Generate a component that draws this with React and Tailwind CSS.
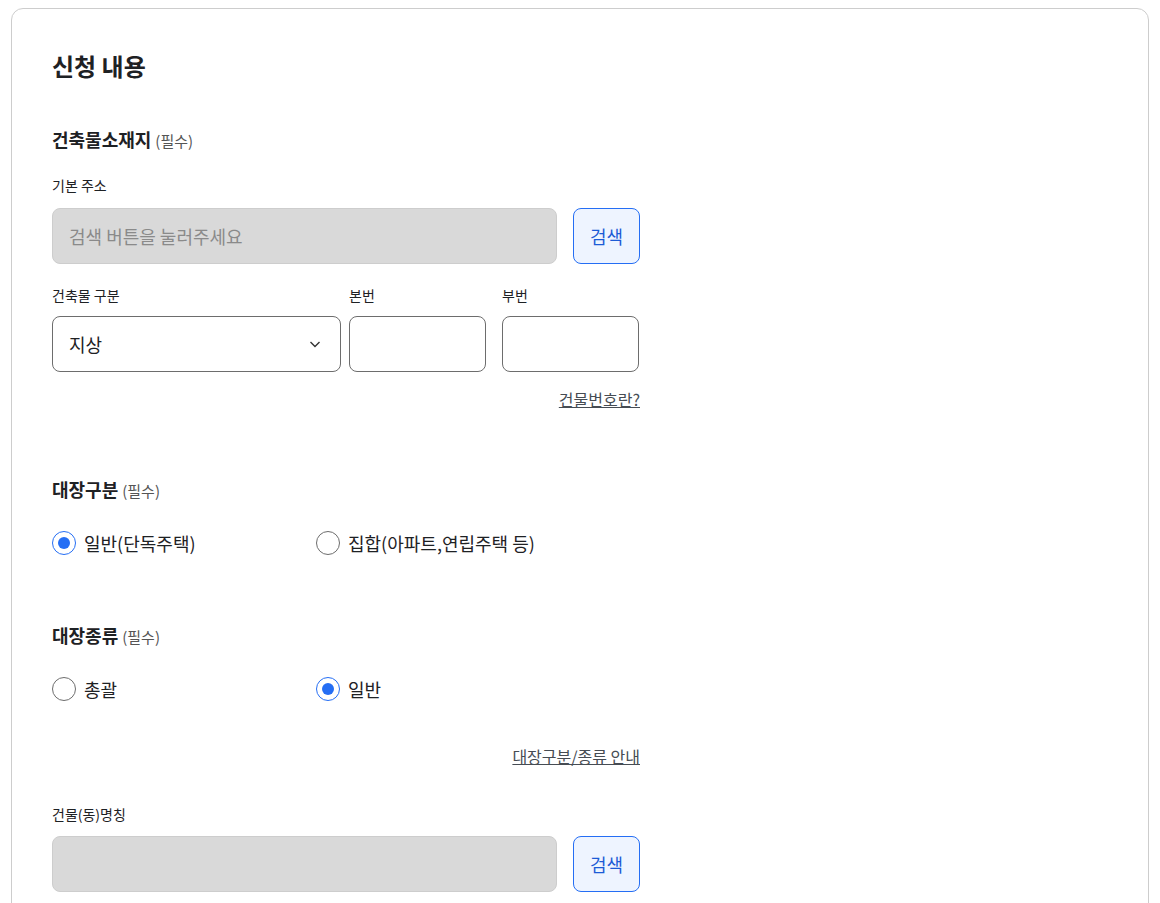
import React from "react";

const font = { fontFamily: '"Noto Sans CJK KR", "Noto Sans", sans-serif' };

function Heading({ children, className }) {
  return (
    <div className={"flex items-baseline h-6 leading-6 text-[18px] font-bold text-[#1e2124] " + className}>
      <span>{children}</span>
      <span className="ml-1 text-[15px] font-normal text-[#555] leading-6">(필수)</span>
    </div>
  );
}

function Radio({ checked, label }) {
  return (
    <label className="flex items-center gap-2 h-6">
      <span
        className={
          checked
            ? "w-6 h-6 rounded-full border border-[#256ef4] flex items-center justify-center bg-white"
            : "w-6 h-6 rounded-full border border-[#6d6d6d] bg-white"
        }
      >
        {checked && <span className="w-3 h-3 rounded-full bg-[#256ef4]" />}
      </span>
      <span className="text-[18px] text-[#1e2124] leading-6">{label}</span>
    </label>
  );
}

function SearchButton() {
  return (
    <button className="w-[67px] h-14 rounded-lg border border-[#256ef4] bg-[#eef4ff] text-[#1c5bd6] text-[18px] shrink-0">
      검색
    </button>
  );
}

export default function App() {
  return (
    <div className="bg-white min-h-[903px] pt-2 px-[11px]" style={font}>
      <div className="border border-[#cdcdcd] rounded-xl bg-white px-10 pt-[41px] pb-10 min-h-[920px]">
        <h2 className="text-[24px] font-bold leading-8 h-8 text-[#1e2124]">신청 내용</h2>

        <div className="w-[588px]">
          <Heading className="mt-[45px]">건축물소재지</Heading>
          <div className="mt-[24px] h-5 leading-5 text-[14px] text-[#1e2124]">기본 주소</div>
          <div className="mt-[13px] flex gap-4">
            <div className="flex-1 h-14 rounded-lg border border-[#cdcdcd] bg-[#d9d9d9] flex items-center px-4 text-[18px] text-[#8a8a8a]">
              검색 버튼을 눌러주세요
            </div>
            <SearchButton />
          </div>

          <div className="mt-[21px] flex">
            <div className="w-[289px]">
              <div className="h-5 leading-5 text-[14px] text-[#1e2124]">건축물 구분</div>
              <div className="mt-[11px] h-14 rounded-lg border border-[#6d6d6d] flex items-center justify-between pl-4 pr-[18px] text-[18px] text-[#1e2124]">
                <span>지상</span>
                <svg width="14" height="14" viewBox="0 0 14 14" fill="none" stroke="#333" strokeWidth="1.4">
                  <path d="M2.5 5 L7 9.5 L11.5 5" />
                </svg>
              </div>
            </div>
            <div className="w-[137px] ml-2">
              <div className="h-5 leading-5 text-[14px] text-[#1e2124]">본번</div>
              <div className="mt-[11px] h-14 rounded-lg border border-[#6d6d6d]" />
            </div>
            <div className="w-[137px] ml-4">
              <div className="h-5 leading-5 text-[14px] text-[#1e2124]">부번</div>
              <div className="mt-[11px] h-14 rounded-lg border border-[#6d6d6d]" />
            </div>
          </div>
          <div className="mt-[17px] h-5 flex justify-end">
            <a className="leading-5 text-[16px] text-[#464c53] underline">건물번호란?</a>
          </div>

          <Heading className="mt-[68px]">대장구분</Heading>
          <div className="mt-[30px] flex">
            <div className="w-[264px]">
              <Radio checked label="일반(단독주택)" />
            </div>
            <Radio label="집합(아파트,연립주택 등)" />
          </div>

          <Heading className="mt-[68px]">대장종류</Heading>
          <div className="mt-[30px] flex">
            <div className="w-[264px]">
              <Radio label="총괄" />
            </div>
            <Radio checked label="일반" />
          </div>
          <div className="mt-[45px] h-5 flex justify-end">
            <a className="leading-5 text-[16px] text-[#464c53] underline">대장구분/종류 안내</a>
          </div>

          <div className="mt-[38px] h-5 leading-5 text-[14px] text-[#1e2124]">건물(동)명칭</div>
          <div className="mt-[12px] flex gap-4">
            <div className="flex-1 h-14 rounded-lg border border-[#cdcdcd] bg-[#d9d9d9]" />
            <SearchButton />
          </div>
        </div>
      </div>
    </div>
  );
}
